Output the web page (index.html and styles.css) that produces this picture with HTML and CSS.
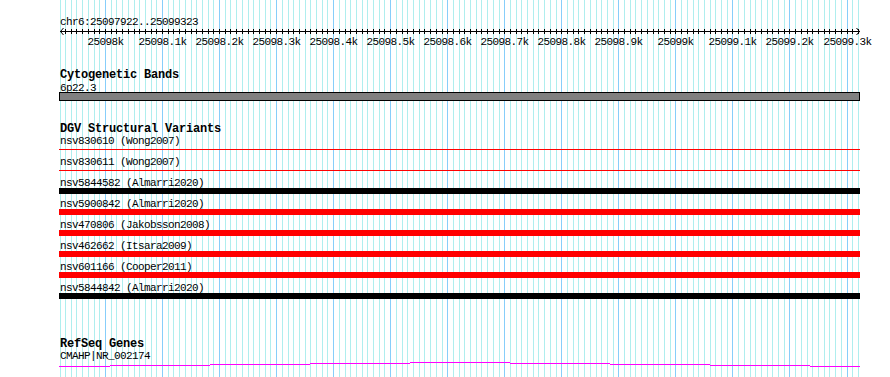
FILE: index.html
```html
<!DOCTYPE html>
<html lang="en">
<head>
<meta charset="UTF-8" />
<title>chr6:25097922..25099323</title>
<link rel="stylesheet" href="styles.css">
</head>
<body>
<div class="browser">
  <svg class="grid" id="grid" width="890" height="377"></svg>
  <div class="panel">
    <div class="locus">chr6:25097922..25099323</div>
    <svg class="ruler" id="ruler" width="890" height="20"></svg>

    <section class="track cyto">
      <h2>Cytogenetic Bands</h2>
      <div class="label">6p22.3</div>
      <div class="band"></div>
    </section>

    <section class="track dgv">
      <h2>DGV Structural Variants</h2>
      <div class="feature"><div class="label">nsv830610 (Wong2007)</div><div class="bar thin red"></div></div>
      <div class="feature"><div class="label">nsv830611 (Wong2007)</div><div class="bar thin red"></div></div>
      <div class="feature"><div class="label">nsv5844582 (Almarri2020)</div><div class="bar black"></div></div>
      <div class="feature"><div class="label">nsv5900842 (Almarri2020)</div><div class="bar red"></div></div>
      <div class="feature"><div class="label">nsv470806 (Jakobsson2008)</div><div class="bar red"></div></div>
      <div class="feature"><div class="label">nsv462662 (Itsara2009)</div><div class="bar red"></div></div>
      <div class="feature"><div class="label">nsv601166 (Cooper2011)</div><div class="bar red"></div></div>
      <div class="feature"><div class="label">nsv5844842 (Almarri2020)</div><div class="bar black"></div></div>
    </section>

    <section class="track refseq">
      <h2>RefSeq Genes</h2>
      <div class="label">CMAHP|NR_002174</div>
      <svg class="gene" width="890" height="10">
        <g fill="#ff00ff">
          <rect x="59" y="5" width="51" height="1"/>
          <rect x="110" y="4" width="100" height="1"/>
          <rect x="210" y="3" width="100" height="1"/>
          <rect x="310" y="2" width="100" height="1"/>
          <rect x="410" y="1" width="100" height="1"/>
          <rect x="510" y="2" width="100" height="1"/>
          <rect x="610" y="3" width="100" height="1"/>
          <rect x="710" y="4" width="100" height="1"/>
          <rect x="810" y="5" width="50" height="1"/>
        </g>
      </svg>
    </section>
  </div>
</div>

<script>
const NS = "http://www.w3.org/2000/svg";
const start = 25097922, end = 25099323;
const x0 = 60.5, scale = 0.5704;

function px(bp) {
  return Math.round(x0 + (bp - start) * scale);
}

function rect(parent, x, y, w, h, fill) {
  const r = document.createElementNS(NS, "rect");
  r.setAttribute("x", x);
  r.setAttribute("y", y);
  r.setAttribute("width", w);
  r.setAttribute("height", h);
  r.setAttribute("fill", fill);
  parent.appendChild(r);
}

// grid lines behind the tracks
const grid = document.getElementById("grid");
rect(grid, 60, 0, 1, 377, "#afeeee");
for (let bp = 25097930; bp <= end; bp += 10) {
  rect(grid, px(bp), 0, 1, 377, bp % 100 === 0 ? "#87cefa" : "#afeeee");
}

// ruler with ticks and labels
const ruler = document.getElementById("ruler");
rect(ruler, 60, 4, 800, 1, "#000");
const arrows = document.createElementNS(NS, "path");
arrows.setAttribute("d", "M63.5 1 L60.5 4.5 L63.5 8 M856.5 1 L859.5 4.5 L856.5 8");
arrows.setAttribute("stroke", "#000");
arrows.setAttribute("fill", "none");
ruler.appendChild(arrows);
for (let bp = 25097930; bp <= end; bp += 10) {
  const x = px(bp);
  rect(ruler, x, 2, 1, 5, "#000");
  if (bp % 100 === 0) {
    const t = document.createElementNS(NS, "text");
    t.setAttribute("x", x + 0.5);
    t.setAttribute("y", 17.5);
    t.setAttribute("text-anchor", "middle");
    t.textContent = (bp / 1000) + "k";
    ruler.appendChild(t);
  }
}
</script>
</body>
</html>
```

FILE: styles.css
```css
body {
  margin: 0;
  background: #fff;
}
.browser {
  position: relative;
  width: 890px;
  height: 377px;
  overflow: hidden;
  font-family: "Liberation Mono", "DejaVu Sans Mono", monospace;
  font-size: 11px;
  letter-spacing: -0.6px;
  color: #000;
}
.grid {
  position: absolute;
  left: 0;
  top: 0;
}
.panel {
  position: relative;
  padding-left: 59px;
}
.locus {
  padding-top: 17px;
  padding-left: 1px;
  line-height: 10px;
}
.ruler, .gene {
  display: block;
  margin-left: -59px;
}
.ruler text {
  font-family: "Liberation Mono", monospace;
  font-size: 11px;
  letter-spacing: -0.6px;
}
.track h2 {
  margin: 0;
  padding-left: 1px;
  font-size: 12px;
  font-weight: bold;
  line-height: 10px;
  letter-spacing: -0.2px;
}
.label {
  padding-left: 1px;
  line-height: 10px;
  white-space: nowrap;
}
.cyto { margin-top: 23px; }
.cyto .label { margin-top: 3px; }
.band {
  width: 799px;
  height: 7px;
  margin-top: -1px;
  background: #808080;
  border: 1px solid #000;
}
.dgv { margin-top: 23px; }
.dgv .feature:first-of-type { margin-top: 2px; }
.feature {
  height: 21px;
}
.bar {
  width: 801px;
  height: 6px;
}
.bar.red { background: #ff0000; }
.bar.black { background: #000; }
.bar.thin {
  background: linear-gradient(to bottom, transparent 3px, #ff0000 3px, #ff0000 4px, transparent 4px);
}
.refseq { margin-top: 35px; }
.refseq .label { margin-top: 2px; }
```
